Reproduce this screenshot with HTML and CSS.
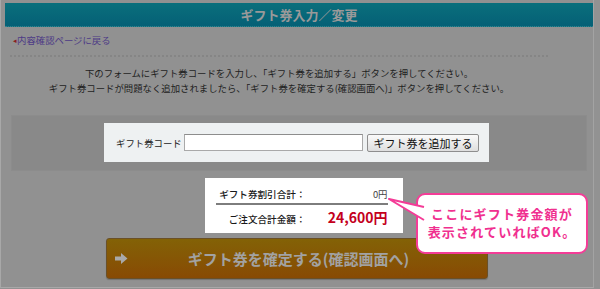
FILE: index.html
```html
<!DOCTYPE html>
<html lang="ja">
<head>
  <meta charset="UTF-8">
  <meta name="viewport" content="width=device-width, initial-scale=1.0">
  <title>ギフト券入力／変更</title>
  <link rel="stylesheet" href="styles.css">
</head>
<body>
  <div class="frame">
    <h1 class="page-title">ギフト券入力／変更</h1>

    <div class="content">
      <a class="back-link" href="#"><span class="back-mark">◂</span>内容確認ページに戻る</a>
      <hr class="dots">

      <p class="lead">
        下のフォームにギフト券コードを入力し、「ギフト券を追加する」ボタンを押してください。<br>
        ギフト券コードが問題なく追加されましたら、「ギフト券を確定する(確認画面へ)」ボタンを押してください。
      </p>

      <div class="code-band">
        <div class="code-box">
          <label for="gift_code">ギフト券コード</label>
          <input type="text" id="gift_code" name="gift_code">
          <button type="button" class="add-btn">ギフト券を追加する</button>
        </div>
      </div>

      <div class="totals">
        <div class="totals-box">
          <div class="row row-discount">
            <span class="row-label">ギフト券割引合計：</span>
            <span class="row-value">0円</span>
          </div>
          <div class="row row-total">
            <span class="row-label">ご注文合計金額：</span>
            <span class="row-value total-price">24,600円</span>
          </div>
        </div>
      </div>

      <div class="confirm">
        <button type="button" class="confirm-btn">
          <svg class="confirm-arrow" width="13" height="11" viewBox="0 0 13 11">
            <path d="M0 3.5H6V0L12.5 5.5L6 11V7.5H0Z" fill="#a9a9a9"/>
          </svg>
          <span>ギフト券を確定する(確認画面へ)</span>
        </button>
      </div>
    </div>

    <div class="callout">
      <svg class="callout-tail" width="40" height="30" viewBox="0 0 40 30">
        <path d="M36 9L1 1L36 22" fill="#fff" stroke="#f43c97" stroke-width="2" stroke-linejoin="round"/>
      </svg>
      <div class="callout-body">ここにギフト券金額が<br>表示されていればOK。</div>
    </div>
  </div>
</body>
</html>
```

FILE: styles.css
```css
* {
  box-sizing: border-box;
}

body {
  margin: 0;
  background: #929292;
  font-family: "Noto Sans CJK JP", "Noto Sans", sans-serif;
}

.frame {
  position: relative;
  width: 594px;
  height: 288px;
  padding: 3px 0 0 4px;
  border-left: 1px solid #a8a8a8;
  border-right: 1px solid #a3a3a3;
  border-bottom: 1px solid #a8a8a8;
  background: #919191;
}

.page-title {
  width: 588px;
  height: 24px;
  margin: 0;
  background: linear-gradient(#0a6f7c, #056076);
  border-bottom: 1px dotted #33808f;
  color: #999;
  font-size: 13px;
  font-weight: bold;
  line-height: 23px;
  text-align: center;
}

.content {
  padding: 0 0 0 5px;
}

.back-link {
  display: block;
  margin-top: 6px;
  padding-left: 3px;
  color: #4d3a86;
  font-size: 9.4px;
  line-height: 15px;
  text-decoration: none;
}

.back-mark {
  color: #8a2020;
  font-size: 7px;
  vertical-align: 1px;
}

.dots {
  width: 538px;
  margin: 7px 0 0 0;
  border: none;
  border-top: 2px dotted #858585;
}

.lead {
  width: 538px;
  margin: 9px 0 0 0;
  color: #1e1e1e;
  font-size: 9.4px;
  line-height: 15px;
  text-align: center;
}

.code-band {
  display: flex;
  justify-content: center;
  width: 576px;
  height: 56px;
  margin: 19px 0 0 1px;
  padding: 7px 5px 0 0;
  background: #898989;
  border: 1px solid #8c8c8c;
}

.code-box {
  display: flex;
  align-items: center;
  width: 385px;
  height: 39px;
  padding-left: 12px;
  background: #eef1f2;
  font-size: 9.4px;
  color: #222;
}

.code-box label {
  width: 68px;
}

.code-box input {
  width: 179px;
  height: 17px;
  margin: 0;
  border: 1px solid #a9a9a9;
  border-top-color: #8d8d8d;
  background: #fff;
}

.add-btn {
  width: 112px;
  height: 18px;
  margin-left: 4px;
  padding: 0;
  border: 1px solid #8e8e8e;
  border-radius: 2px;
  background: linear-gradient(#fafafa, #dedede);
  color: #111;
  font-family: inherit;
  font-size: 11px;
  line-height: 14px;
}

.totals {
  display: flex;
  justify-content: center;
  margin: 7px 0 0 1px;
  width: 585px;
}

.totals-box {
  width: 198px;
  height: 55px;
  margin-left: 0;
  padding: 9px 15px 0 11px;
  background: #fff;
}

.row {
  display: flex;
  align-items: baseline;
}

.row-label {
  width: 90px;
  text-align: right;
  font-size: 9.6px;
  font-weight: 500;
  color: #1a1a1a;
}

.row-value {
  flex: 1;
  text-align: right;
}

.row-discount {
  height: 18px;
  border-bottom: 2px solid #7d7d7d;
}

.row-discount .row-value {
  color: #444;
  font-size: 9.4px;
}

.row-total {
  padding-top: 2px;
}

.total-price {
  color: #c4001c;
  font-size: 14px;
  font-weight: bold;
}

.confirm {
  display: flex;
  justify-content: center;
  width: 574px;
  margin-top: 5px;
}

.confirm-btn {
  display: flex;
  align-items: center;
  width: 382px;
  height: 41px;
  padding: 0 0 0 8px;
  border: 1px solid #6a5028;
  border-radius: 3px;
  background: linear-gradient(#836206, #884a04);
  box-shadow: 0 1px 1px rgba(0, 0, 0, 0.2);
  color: #a2a2a2;
  font-family: inherit;
  font-size: 15px;
  font-weight: bold;
}

.confirm-btn span {
  flex: 1;
  padding-right: 18px;
  text-align: center;
}

.callout {
  position: absolute;
  left: 386px;
  top: 193px;
}

.callout-tail {
  position: absolute;
  left: 1px;
  top: 5px;
  z-index: 2;
}

.callout-body {
  position: relative;
  margin-left: 29px;
  width: 172px;
  height: 61px;
  padding-top: 10px;
  border: 2px solid #f43c97;
  border-radius: 9px;
  background: #fff;
  color: #f0308f;
  font-size: 13px;
  font-weight: bold;
  line-height: 18px;
  letter-spacing: 1.2px;
  text-align: center;
}
```
